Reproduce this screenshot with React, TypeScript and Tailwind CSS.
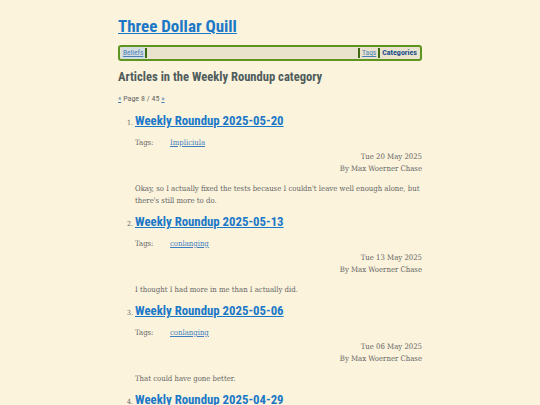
import React from 'react'

const heading = { fontFamily: 'Roboto, "Open Sans", sans-serif' }

const ARTICLES = [
  {
    title: 'Weekly Roundup 2025-05-20',
    tag: 'Impliciula',
    date: 'Tue 20 May 2025',
    excerpt: "Okay, so I actually fixed the tests because I couldn't leave well enough alone, but there's still more to do.",
  },
  {
    title: 'Weekly Roundup 2025-05-13',
    tag: 'conlanging',
    date: 'Tue 13 May 2025',
    excerpt: 'I thought I had more in me than I actually did.',
  },
  {
    title: 'Weekly Roundup 2025-05-06',
    tag: 'conlanging',
    date: 'Tue 06 May 2025',
    excerpt: 'That could have gone better.',
  },
  {
    title: 'Weekly Roundup 2025-04-29',
    tag: 'conlanging',
    date: 'Tue 29 Apr 2025',
    excerpt: 'More of the same.',
  },
]

export default function App() {
  return (
    <div
      className="min-h-screen bg-[#fbf3dc] text-[#555]"
      style={{ fontFamily: '"DejaVu Serif Condensed", "DejaVu Serif", serif', fontStretch: 'condensed' }}
    >
      <div className="w-[304px] mx-auto pt-[15px]">
        {/* Header */}
        <h1 className="text-[17px] leading-[22px] font-bold" style={heading}>
          <a href="#" className="text-[#1b78c8] underline">Three Dollar Quill</a>
        </h1>

        {/* Nav bar */}
        <nav
          className="mt-[8px] h-[16px] flex items-center border-2 border-[#5e9420] rounded-[3px] bg-[#e9e2cc] px-[1px] text-[7.5px]"
          style={heading}
        >
          <a href="#" className="px-[2px] bg-[#d6dde0] text-[#4a82b8] underline">Beliefs</a>
          <span className="w-[2px] h-[10px] bg-[#3f6a12]" />
          <span className="flex-1" />
          <span className="w-[2px] h-[10px] bg-[#3f6a12]" />
          <a href="#" className="px-[2px] text-[#4a82b8] underline">Tags</a>
          <span className="w-[2px] h-[10px] bg-[#3f6a12]" />
          <a href="#" className="px-[2px] text-[8px] font-bold text-[#1d4f8a]">Categories</a>
        </nav>

        {/* Category heading */}
        <h2 className="mt-[8px] text-[12.6px] leading-[16px] font-bold text-[#4f5c5c]" style={heading}>
          Articles in the Weekly Roundup category
        </h2>

        <p className="mt-[9px] text-[8px] leading-[10px] text-[#666]" style={heading}>
          <a href="#" className="text-[#4a82b8] underline">«</a> Page 8 / 45{' '}
          <a href="#" className="text-[#4a82b8] underline">»</a>
        </p>

        {/* Articles */}
        <ol className="mt-[9px] pl-[17px] list-decimal marker:text-[7px] marker:text-[#666]">
          {ARTICLES.map(a => (
            <li key={a.title} className="mb-[7px]">
              <h3 className="text-[12.8px] leading-[16px] font-bold" style={heading}>
                <a href="#" className="text-[#1b78c8] underline">{a.title}</a>
              </h3>
              <div className="mt-[9px] flex text-[7.7px] leading-[10px] text-[#666]">
                <span className="w-[35px]">Tags:</span>
                <a href="#" className="text-[#3f7fc0] underline">{a.tag}</a>
              </div>
              <div className="mt-[3px] text-right text-[7.7px] leading-[12px] text-[#666]">
                <div>{a.date}</div>
                <div>By Max Woerner Chase</div>
              </div>
              <p className="mt-[8px] text-[7.7px] leading-[12px] text-[#666]">{a.excerpt}</p>
            </li>
          ))}
        </ol>
      </div>
    </div>
  )
}
